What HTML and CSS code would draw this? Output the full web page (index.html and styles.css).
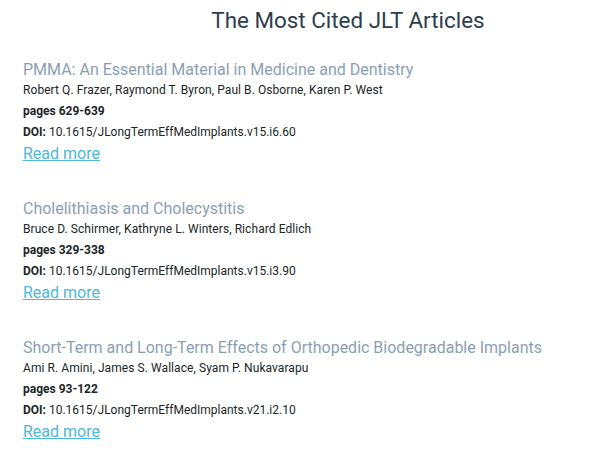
FILE: index.html
```html
<!DOCTYPE html>
<html lang="en">
<head>
<meta charset="utf-8">
<title>The Most Cited JLT Articles</title>
<link rel="stylesheet" href="styles.css">
</head>
<body>
<div class="page">
  <h1 class="heading">The Most Cited JLT Articles</h1>
  <div class="list">
    <div class="article">
      <a class="title" href="#">PMMA: An Essential Material in Medicine and Dentistry</a>
      <div class="authors">Robert Q. Frazer, Raymond T. Byron, Paul B. Osborne, Karen P. West</div>
      <div class="pages">pages 629-639</div>
      <div class="doi"><b>DOI:</b> 10.1615/JLongTermEffMedImplants.v15.i6.60</div>
      <a class="more" href="#">Read more</a>
    </div>
    <div class="article">
      <a class="title" href="#">Cholelithiasis and Cholecystitis</a>
      <div class="authors">Bruce D. Schirmer, Kathryne L. Winters, Richard Edlich</div>
      <div class="pages">pages 329-338</div>
      <div class="doi"><b>DOI:</b> 10.1615/JLongTermEffMedImplants.v15.i3.90</div>
      <a class="more" href="#">Read more</a>
    </div>
    <div class="article">
      <a class="title" href="#">Short-Term and Long-Term Effects of Orthopedic Biodegradable Implants</a>
      <div class="authors">Ami R. Amini, James S. Wallace, Syam P. Nukavarapu</div>
      <div class="pages">pages 93-122</div>
      <div class="doi"><b>DOI:</b> 10.1615/JLongTermEffMedImplants.v21.i2.10</div>
      <a class="more" href="#">Read more</a>
    </div>
  </div>
</div>
</body>
</html>
```
FILE: styles.css
```css
html, body {
  margin: 0;
  padding: 0;
  background: #ffffff;
}
body {
  font-family: Roboto, "Liberation Sans", sans-serif;
  color: #212529;
}
.page {
  padding: 7px 23px;
}
.heading {
  margin: 0;
  padding-left: 80px;
  text-align: center;
  font-size: 22.4px;
  line-height: 27px;
  font-weight: 400;
  color: #2c3e50;
}
.list {
  margin-top: 26px;
  display: flex;
  flex-direction: column;
  gap: 33px;
}
.article {
  display: flex;
  flex-direction: column;
  align-items: flex-start;
}
.title {
  font-size: 16px;
  line-height: 20px;
  color: #8a9fb4;
  text-decoration: none;
}
.authors {
  margin-top: 2px;
  font-size: 12px;
  line-height: 16px;
  letter-spacing: 0.07px;
  color: #212529;
}
.pages {
  margin-top: 3px;
  font-size: 12px;
  line-height: 20px;
  font-weight: 700;
  color: #212529;
}
.doi {
  margin-top: 1px;
  font-size: 12px;
  line-height: 20px;
  color: #212529;
}
.doi b {
  font-weight: 700;
}
.more {
  font-size: 16px;
  line-height: 24px;
  color: #4bb8dc;
  text-decoration: underline;
}
```
